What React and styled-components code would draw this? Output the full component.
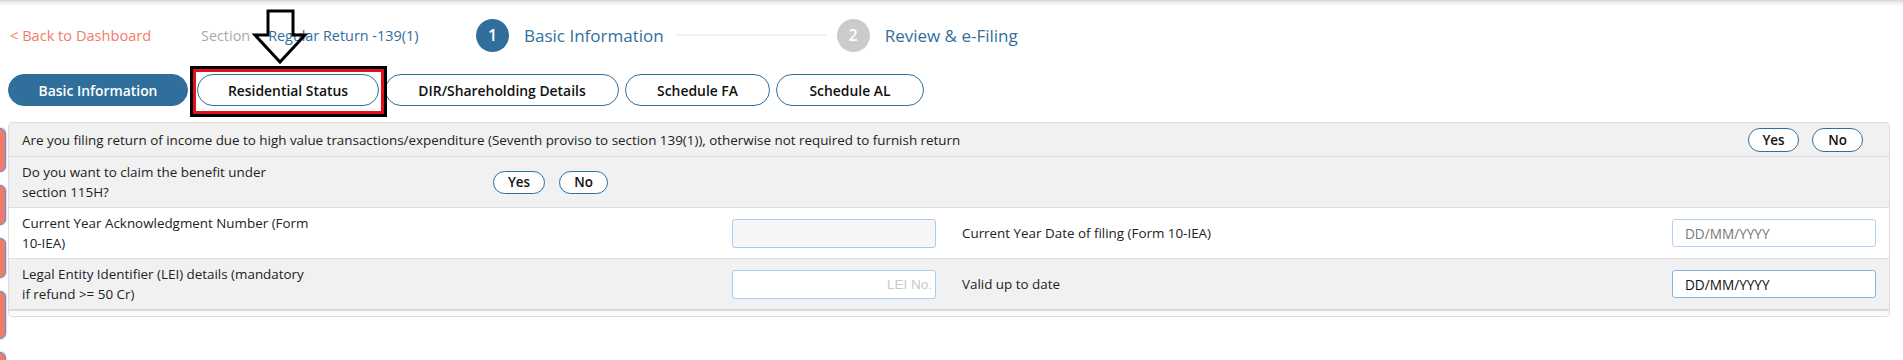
import styled, { createGlobalStyle } from "styled-components";

const GlobalStyle = createGlobalStyle`
  html, body {
    margin: 0;
    padding: 0;
    background: #ffffff;
    font-family: "Open Sans", "Noto Sans", sans-serif;
    color: #212529;
  }
  * { box-sizing: border-box; }
`;

const BLUE = "#306f9c";

const tabs = [
  { label: "Basic Information", width: 180, active: true },
  { label: "Residential Status", width: 182 },
  { label: "DIR/Shareholding Details", width: 234 },
  { label: "Schedule FA", width: 145 },
  { label: "Schedule AL", width: 148 },
];

const dock = [44, 40, 40, 48, 40];

function App() {
  return (
    <>
      <GlobalStyle />
      <Page>
        <TopShadow />

        <Header>
          <BackLink>&lt; Back to Dashboard</BackLink>
          <SectionInfo>
            <SectionLabel>Section</SectionLabel>
            <SectionValue>Regular Return -139(1)</SectionValue>
          </SectionInfo>
          <Stepper>
            <Step>
              <StepDot $done>1</StepDot>
              <StepLabel>Basic Information</StepLabel>
            </Step>
            <Connector />
            <Step>
              <StepDot>2</StepDot>
              <StepLabel>Review &amp; e-Filing</StepLabel>
            </Step>
          </Stepper>
        </Header>

        <TabBar>
          {tabs.map((t) => (
            <Tab key={t.label} $active={t.active} $w={t.width}>
              {t.label}
            </Tab>
          ))}
        </TabBar>

        <Panel>
          <WideRow>
            <Label>
              Are you filing return of income due to high value transactions/expenditure (Seventh proviso to
              section 139(1)), otherwise not required to furnish return
            </Label>
            <Choices>
              <Choice $w={51}>Yes</Choice>
              <Choice $w={51}>No</Choice>
            </Choices>
          </WideRow>

          <ClaimRow>
            <ClaimLabel>
              Do you want to claim the benefit under
              <br />
              section 115H?
            </ClaimLabel>
            <Choices $gap={14}>
              <Choice $w={52} $h={23}>Yes</Choice>
              <Choice $w={49} $h={23}>No</Choice>
            </Choices>
          </ClaimRow>

          <FieldRow $white>
            <Label>
              Current Year Acknowledgment Number (Form
              <br />
              10-IEA)
            </Label>
            <TextInput $filled readOnly />
            <Label>Current Year Date of filing (Form 10-IEA)</Label>
            <DateInput placeholder="DD/MM/YYYY" />
          </FieldRow>

          <FieldRow $last>
            <Label>
              Legal Entity Identifier (LEI) details (mandatory
              <br />
              if refund &gt;= 50 Cr)
            </Label>
            <TextInput placeholder="LEI No." $right />
            <Label>Valid up to date</Label>
            <DateInput defaultValue="DD/MM/YYYY" $focus />
          </FieldRow>

          <PanelFoot />
        </Panel>

        {/* screenshot annotation: arrow + highlight box */}
        <Arrow width="60" height="60" viewBox="0 0 60 60">
          <polygon
            points="15,3 40,3 40,27 52,27 27,54 2,27 15,27"
            fill="none"
            stroke="#000"
            strokeWidth="3"
            strokeLinejoin="miter"
          />
        </Arrow>
        <Highlight />

        <SideDock>
          {dock.map((h, i) => (
            <DockTab key={i} $h={h} />
          ))}
        </SideDock>
      </Page>
    </>
  );
}

const Page = styled.div`
  position: relative;
  width: 1903px;
  height: 360px;
  overflow: hidden;
`;

const TopShadow = styled.div`
  height: 6px;
  background: linear-gradient(to bottom, #d6d6d6, #ececec 40%, #ffffff);
`;

const Header = styled.div`
  display: flex;
  align-items: center;
  height: 38px;
  margin-top: 10px;
  padding-left: 10px;
`;

const BackLink = styled.a`
  font-size: 14.6px;
  color: #f47a6c;
  cursor: pointer;
  width: 191px;
  flex-shrink: 0;
`;

const SectionInfo = styled.div`
  display: flex;
  align-items: center;
  gap: 18px;
  font-size: 14.4px;
  width: 275px;
  flex-shrink: 0;
`;

const SectionLabel = styled.span`
  color: #a9a9a9;
`;

const SectionValue = styled.span`
  color: ${BLUE};
`;

const Stepper = styled.div`
  display: flex;
  align-items: center;
`;

const Step = styled.div`
  display: flex;
  align-items: center;
  gap: 15px;
`;

const StepDot = styled.span`
  width: 33px;
  height: 33px;
  border-radius: 50%;
  display: flex;
  align-items: center;
  justify-content: center;
  background: ${(p) => (p.$done ? BLUE : "#cbcbcb")};
  color: #ffffff;
  font-size: 16px;
  font-weight: 600;
`;

const StepLabel = styled.span`
  font-size: 17px;
  color: ${BLUE};
`;

const Connector = styled.span`
  width: 150px;
  height: 2px;
  background: #efefef;
  margin: 0 11px 0 12px;
`;

const TabBar = styled.div`
  display: flex;
  gap: 6px;
  margin-top: 20px;
  padding-left: 8px;
  & > :first-child {
    margin-right: 3px;
  }
`;

const Tab = styled.button`
  width: ${(p) => p.$w}px;
  height: 32px;
  border-radius: 16px;
  border: 1px solid ${BLUE};
  background: ${(p) => (p.$active ? BLUE : "#ffffff")};
  color: ${(p) => (p.$active ? "#ffffff" : "#111111")};
  font-family: inherit;
  font-size: 13.9px;
  font-weight: 600;
  padding: 0;
  cursor: pointer;
`;

const Panel = styled.div`
  margin: 16px 13px 0 8px;
  border: 1px solid #dddddd;
  border-radius: 4px;
  overflow: hidden;
`;

const Label = styled.div`
  font-size: 13.4px;
  line-height: 20px;
  color: #222222;
  white-space: nowrap;
`;

const WideRow = styled.div`
  display: flex;
  align-items: center;
  justify-content: space-between;
  height: 34px;
  padding: 0 26px 0 13px;
  background: #f1f1f1;
  border-bottom: 1px solid #dedede;
`;

const ClaimRow = styled.div`
  display: flex;
  align-items: center;
  gap: 14px;
  height: 51px;
  padding: 0 13px;
  background: #f1f1f1;
  border-bottom: 1px solid #dedede;
`;

const ClaimLabel = styled(Label)`
  width: 457px;
`;

const Choices = styled.div`
  display: flex;
  gap: ${(p) => p.$gap || 13}px;
`;

const Choice = styled.button`
  width: ${(p) => p.$w}px;
  height: ${(p) => p.$h || 24}px;
  border-radius: 12px;
  border: 1px solid ${BLUE};
  background: #ffffff;
  color: #111111;
  font-family: inherit;
  font-size: 13.4px;
  font-weight: 600;
  padding: 0;
  cursor: pointer;
`;

const FieldRow = styled.div`
  display: grid;
  grid-template-columns: 684px 204px 1fr 204px;
  column-gap: 26px;
  align-items: center;
  height: ${(p) => (p.$last ? 52 : 51)}px;
  padding: 0 13px;
  background: ${(p) => (p.$white ? "#ffffff" : "#f1f1f1")};
  border-bottom: ${(p) => (p.$last ? "2px solid #d9d9d9" : "1px solid #dedede")};
`;

const TextInput = styled.input`
  height: 29px;
  width: 204px;
  border: 1px solid #a7cbf2;
  border-radius: 3px;
  background: ${(p) => (p.$filled ? "#f6f6f6" : "#ffffff")};
  padding: 0 3px 0 10px;
  text-align: ${(p) => (p.$right ? "right" : "left")};
  font-family: "Liberation Sans", Arial, sans-serif;
  font-size: 13.5px;
  outline: none;
  &::placeholder {
    color: #c9c9c9;
  }
`;

const DateInput = styled.input`
  height: 28px;
  width: 204px;
  border: 1px solid ${(p) => (p.$focus ? "#80b4ec" : "#b4d2f3")};
  border-radius: 3px;
  background: #ffffff;
  padding: 0 12px;
  font-family: "Open Sans", sans-serif;
  font-size: 13.6px;
  color: #111111;
  outline: none;
  &::placeholder {
    color: #777777;
  }
`;

const PanelFoot = styled.div`
  height: 5px;
  background: #fbfbfb;
`;

const Arrow = styled.svg`
  position: absolute;
  left: 253px;
  top: 8px;
  overflow: visible;
`;

const Highlight = styled.div`
  position: absolute;
  left: 190px;
  top: 66px;
  width: 197px;
  height: 51px;
  border: 3px solid #000000;
  box-shadow: inset 0 0 0 3px #e0101c;
  pointer-events: none;
`;

const SideDock = styled.div`
  position: absolute;
  left: -22px;
  top: 128px;
  display: flex;
  flex-direction: column;
  gap: 13px;
`;

const DockTab = styled.div`
  width: 28px;
  height: ${(p) => p.$h}px;
  border-radius: 6px;
  background: #f07b6b;
  border: 1px solid #6b8fc4;
  box-shadow: 0 0 2px #7aa2d8;
`;

export default App;
